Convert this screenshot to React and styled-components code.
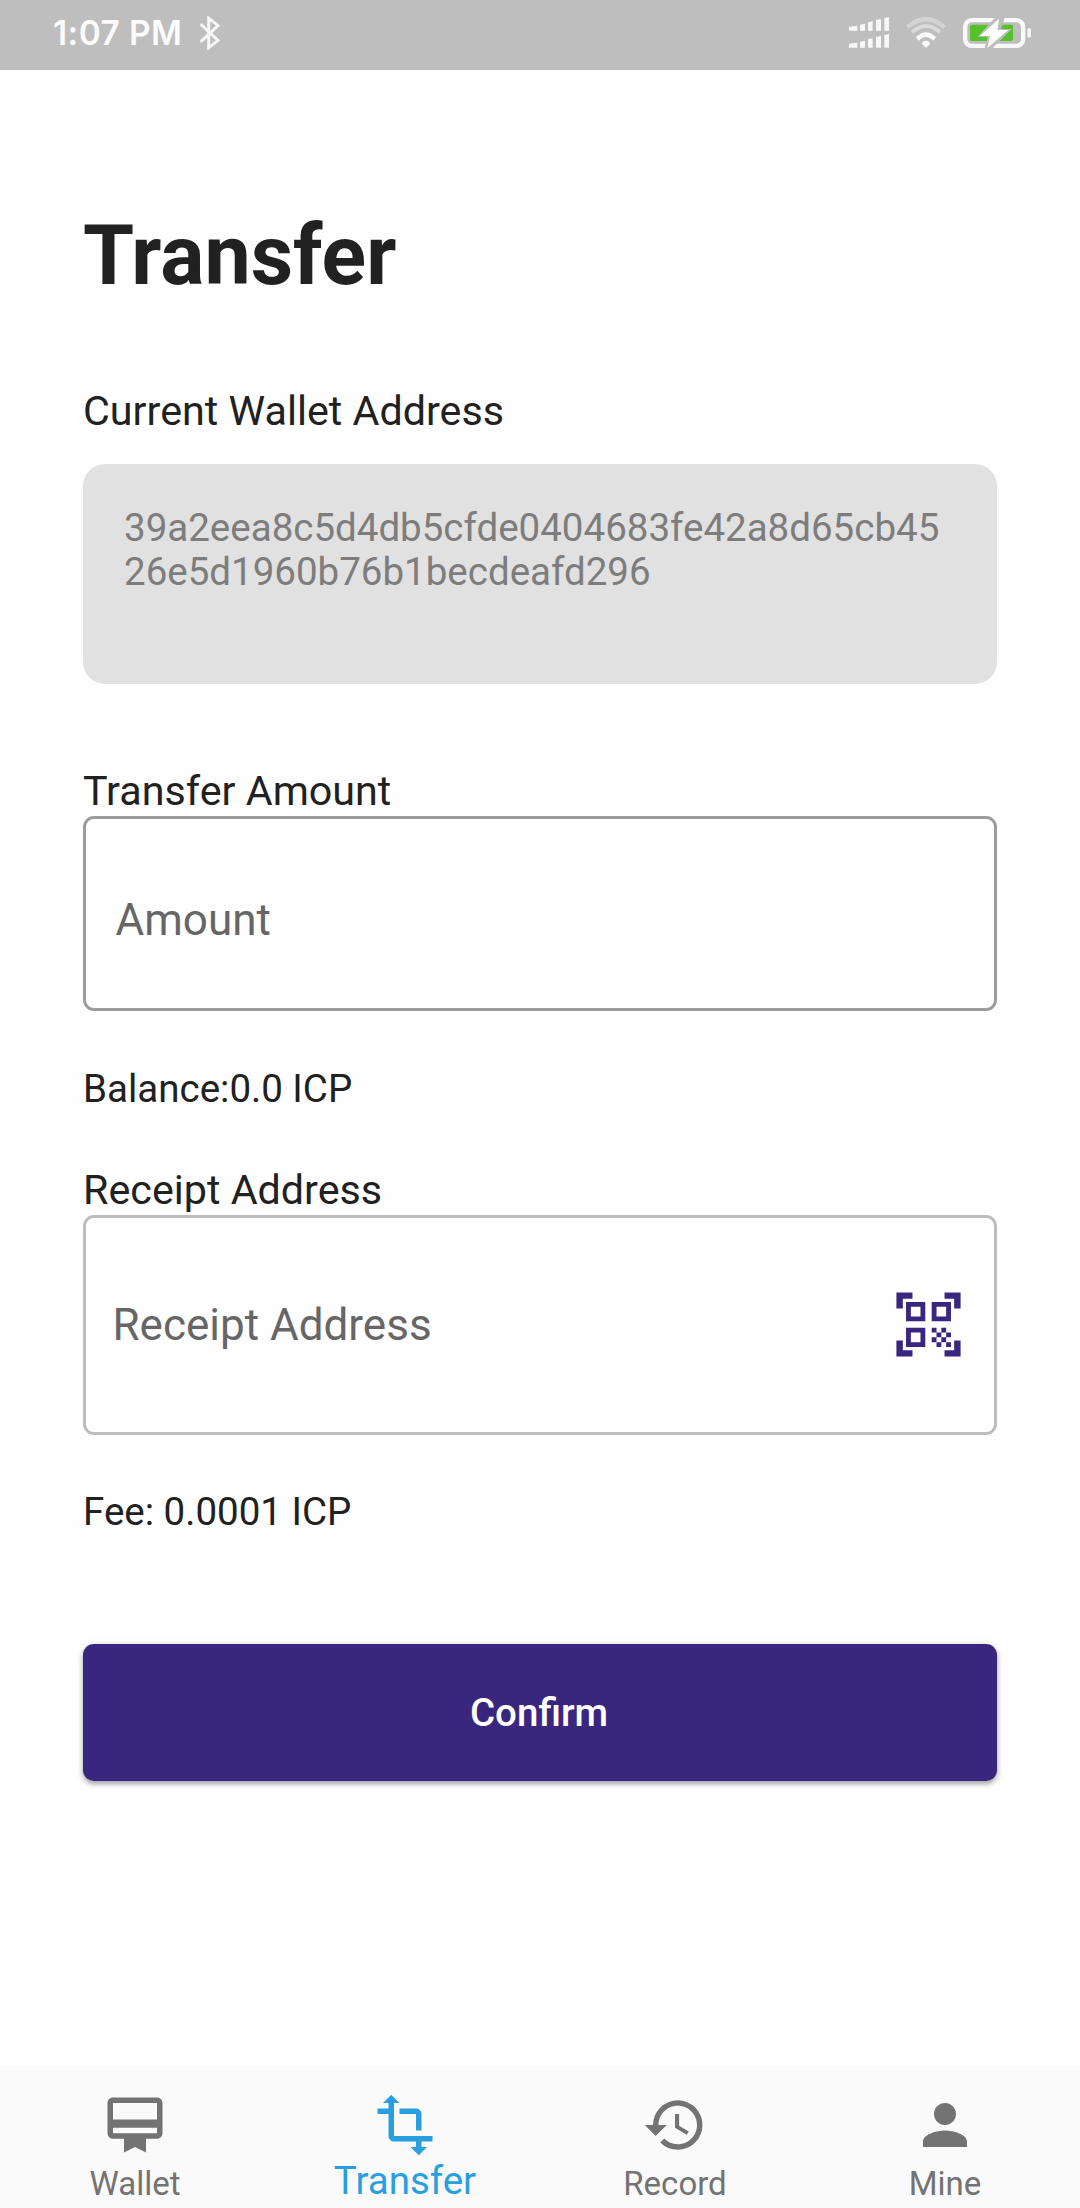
import React from "react";
import styled, { createGlobalStyle } from "styled-components";

const GlobalStyle = createGlobalStyle`
  * { box-sizing: border-box; }
  body { margin: 0; background: #fefefe; }
`;

const Screen = styled.div`
  display: flex;
  flex-direction: column;
  width: 1080px;
  height: 2208px;
  background: #fefefe;
  color: #212121;
  font-family: Roboto, "Liberation Sans", sans-serif;
`;

const StatusBar = styled.header`
  display: flex;
  align-items: center;
  justify-content: space-between;
  height: 70px;
  padding: 0 49px 5px 53px;
  background: #bebebe;
`;

const StatusGroup = styled.div`
  display: flex;
  align-items: center;
  gap: ${(p) => p.$gap}px;
`;

const Clock = styled.span`
  width: 128px;
  white-space: nowrap;
  font: 600 33.5px/40px Inter, "Open Sans", sans-serif;
  letter-spacing: 0.4px;
  color: #fbfbfb;
`;

const Content = styled.main`
  flex: 1;
  display: flex;
  flex-direction: column;
  padding: 138px 83px 0;
`;

const Title = styled.h1`
  margin: 0;
  font-size: 82.5px;
  font-weight: 700;
  line-height: 96px;
`;

const Label = styled.label`
  margin-top: ${(p) => p.$top}px;
  font-size: 41.25px;
  line-height: 48px;
`;

const AddressCard = styled.div`
  height: 219.5px;
  margin-top: 29.5px;
  padding: 42px 40px 42px 41px;
  border-radius: 22px;
  background: #e1e1e1;
  color: #7d7d7d;
  font-size: 38.5px;
  line-height: 44px;
  overflow-wrap: anywhere;
`;

const Field = styled.div`
  display: flex;
  align-items: center;
  justify-content: space-between;
  height: ${(p) => p.$height}px;
  margin-top: 1.5px;
  padding: ${(p) => p.$padding};
  border: 3px solid ${(p) => p.$border};
  border-radius: 11px;
`;

const Hint = styled.span`
  font-size: 44px;
  line-height: 52px;
  color: #666;
`;

const Note = styled.p`
  margin: ${(p) => p.$top}px 0 0;
  font-size: 38.5px;
  line-height: 44px;
`;

const ConfirmButton = styled.button`
  height: 137.5px;
  margin-top: 110px;
  padding: 1px 2px 0 0;
  border: 0;
  border-radius: 11px;
  background: #39267e;
  box-shadow: 0 3px 5px rgba(0, 0, 0, 0.3), 0 1px 8px rgba(0, 0, 0, 0.1);
  color: #fff;
  font: 500 38.5px/44px Roboto, sans-serif;
`;

const NavBar = styled.nav`
  display: grid;
  grid-template-columns: repeat(4, 1fr);
  height: 142px;
  background: #fafafa;
`;

const NavItem = styled.a`
  display: flex;
  flex-direction: column;
  align-items: center;
  padding-top: 26px;
  color: ${(p) => (p.$active ? "#2a9fe0" : "#737373")};
`;

const NavLabel = styled.span`
  margin-top: ${(p) => (p.$active ? 0 : 6)}px;
  font-size: ${(p) => (p.$active ? 38.5 : 33)}px;
  line-height: ${(p) => (p.$active ? 45 : 40)}px;
`;

const Glyph = styled.svg`
  display: block;
  flex: none;
  width: ${(p) => p.$size}px;
  height: ${(p) => p.$size}px;
  fill: ${(p) => p.$color || "currentColor"};
`;

const StatusGlyph = styled.svg`
  display: block;
  flex: none;
  width: ${(p) => p.$w}px;
  height: ${(p) => p.$h}px;
`;

const icons = {
  wallet:
    "M20 2H4c-1.11 0-2 .89-2 2v11c0 1.11.89 2 2 2h4v5l4-2 4 2v-5h4c1.11 0 2-.89 2-2V4c0-1.11-.89-2-2-2zm0 13H4v-2h16v2zm0-5H4V4h16v6z",
  transfer:
    "M22 18v-2H8V4h2L7 1 4 4h2v2H2v2h4v8c0 1.1.9 2 2 2h8v2h-2l3 3 3-3h-2v-2h4zM10 8h6v6h2V8c0-1.1-.9-2-2-2h-6v2z",
  record:
    "M13 3a9 9 0 0 0-9 9H1l3.89 3.89.07.14L9 12H6c0-3.87 3.13-7 7-7s7 3.13 7 7-3.13 7-7 7c-1.93 0-3.68-.79-4.94-2.06l-1.42 1.42A8.954 8.954 0 0 0 13 21a9 9 0 0 0 0-18zm-1 5v5l4.28 2.54.72-1.21-3.5-2.08V8H12z",
  mine: "M12 12c2.21 0 4-1.79 4-4s-1.79-4-4-4-4 1.79-4 4 1.79 4 4 4zm0 2c-2.67 0-8 1.34-8 4v2h16v-2c0-2.66-5.33-4-8-4z",
  scan: "M9.5 6.5v3h-3v-3h3M11 5H5v6h6V5zm-1.5 9.5v3h-3v-3h3M11 13H5v6h6v-6zm6.5-6.5v3h-3v-3h3M19 5h-6v6h6V5zm-6 8h1.5v1.5H13V13zm1.5 1.5H16V16h-1.5v-1.5zM16 13h1.5v1.5H16V13zm-3 3h1.5v1.5H13V16zm1.5 1.5H16V19h-1.5v-1.5zM16 16h1.5v1.5H16V16zm1.5-1.5H19V16h-1.5v-1.5zm0 3H19V19h-1.5v-1.5zM22 7h-2V4h-3V2h5v5zm0 15v-5h-2v3h-3v2h5zM2 22h5v-2H4v-3H2v5zM2 2v5h2V4h3V2H2z",
};

function Icon({ name, size, color }) {
  return (
    <Glyph viewBox="0 0 24 24" $size={size} $color={color}>
      <path d={icons[name]} />
    </Glyph>
  );
}

function Bluetooth() {
  return (
    <StatusGlyph viewBox="0 0 60 102" $w={20} $h={34} fill="none" stroke="#f6f6f6" strokeWidth="9">
      <path d="M2 24 L54 73 L26 95 V7 L54 29 L2 78" />
    </StatusGlyph>
  );
}

function Signal() {
  return (
    <StatusGlyph viewBox="0 0 120 93" $w={40} $h={31} fill="#f7f7f7">
      <path d="M0 29L25 26V41H0zM33 23L48 20V41H33zM57 16L71 13V41H57zM81 9L96 6V41H81zM106 3L120 0V41H106z" />
      <path d="M0 80L25 77V92H0zM33 74L48 71V92H33zM57 67L71 64V92H57zM81 60L96 57V92H81zM106 54L120 51V92H106z" />
    </StatusGlyph>
  );
}

function Wifi() {
  return (
    <StatusGlyph viewBox="0 0 120 93" $w={40} $h={31} fill="none">
      <path d="M4 31Q60 -18 116 31" stroke="#d3d3d3" strokeWidth="13" />
      <path d="M18 46Q60 8 102 46" stroke="#dadada" strokeWidth="12" />
      <path d="M34 66Q60 40 86 66" stroke="#fafafa" strokeWidth="14" />
      <path d="M60 92L48 82Q47 71 60 71Q73 71 72 82z" fill="#fafafa" />
    </StatusGlyph>
  );
}

function Battery() {
  return (
    <StatusGlyph viewBox="0 0 204 90" $w={68} $h={30}>
      <rect x="6.5" y="6.5" width="174" height="77" rx="20" fill="none" stroke="#fafafa" strokeWidth="13" />
      <rect x="21" y="20" width="129" height="49" rx="5" fill="#57c12b" />
      <rect x="193" y="30" width="11" height="29" rx="5" fill="#f4f4f4" />
      <path d="M98 -3L44 56H74L64 93H86L146 33H114L126 -3z" fill="#bebebe" />
      <path d="M108 2L51 54H81L73 90L136 36H103z" fill="#fff" />
    </StatusGlyph>
  );
}

const tabs = [
  { icon: "wallet", label: "Wallet" },
  { icon: "transfer", label: "Transfer", active: true },
  { icon: "record", label: "Record" },
  { icon: "mine", label: "Mine" },
];

export default function App() {
  return (
    <>
      <GlobalStyle />
      <Screen>
        <StatusBar>
          <StatusGroup $gap={19}>
            <Clock>1:07 PM</Clock>
            <Bluetooth />
          </StatusGroup>
          <StatusGroup $gap={17}>
            <Signal />
            <Wifi />
            <Battery />
          </StatusGroup>
        </StatusBar>
        <Content>
          <Title>Transfer</Title>
          <Label $top={82.5}>Current Wallet Address</Label>
          <AddressCard>39a2eea8c5d4db5cfde0404683fe42a8d65cb4526e5d1960b76b1becdeafd296</AddressCard>
          <Label $top={83}>Transfer Amount</Label>
          <Field $height={194.5} $padding="13px 30px 0 29.5px" $border="#9c9c9c">
            <Hint>Amount</Hint>
          </Field>
          <Note $top={56}>Balance:0.0 ICP</Note>
          <Label $top={55}>Receipt Address</Label>
          <Field $height={219.5} $padding="0 27px 0 26.5px" $border="#bdbdbd">
            <Hint>Receipt Address</Hint>
            <Icon name="scan" size={77} color="#39267e" />
          </Field>
          <Note $top={55}>Fee: 0.0001 ICP</Note>
          <ConfirmButton>Confirm</ConfirmButton>
        </Content>
        <NavBar>
          {tabs.map((tab) => (
            <NavItem key={tab.label} $active={tab.active}>
              <Icon name={tab.icon} size={66} />
              <NavLabel $active={tab.active}>{tab.label}</NavLabel>
            </NavItem>
          ))}
        </NavBar>
      </Screen>
    </>
  );
}
